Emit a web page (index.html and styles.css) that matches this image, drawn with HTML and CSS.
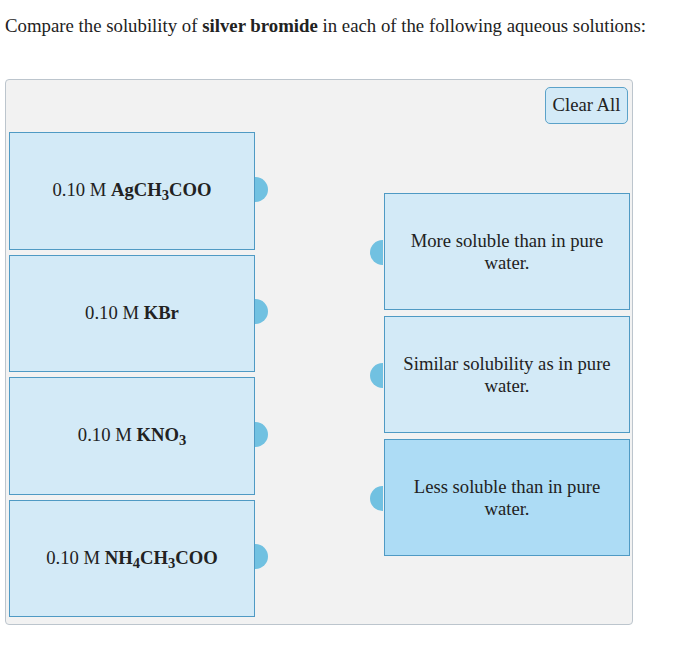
FILE: index.html
```html
<!DOCTYPE html>
<html>
<head>
<meta charset="utf-8">
<link rel="stylesheet" href="styles.css">
</head>
<body>
<p class="prompt">Compare the solubility of <b>silver bromide</b> in each of the following aqueous solutions:</p>
<div class="board">
  <div class="sources">
    <div class="item src"><span>0.10 M <b>AgCH<sub>3</sub>COO</b></span></div>
    <div class="item src"><span>0.10 M <b>KBr</b></span></div>
    <div class="item src"><span>0.10 M <b>KNO<sub>3</sub></b></span></div>
    <div class="item src"><span>0.10 M <b>NH<sub>4</sub>CH<sub>3</sub>COO</b></span></div>
  </div>
  <div class="targets">
    <button class="clear">Clear All</button>
    <div class="target-list">
      <div class="item dst"><span>More soluble than in pure water.</span></div>
      <div class="item dst"><span>Similar solubility as in pure water.</span></div>
      <div class="item dst active"><span>Less soluble than in pure water.</span></div>
    </div>
  </div>
</div>
</body>
</html>
```
FILE: styles.css
```css
html, body {
  margin: 0;
  padding: 0;
  background: #ffffff;
}
body {
  padding: 0 5px;
  font-family: "Liberation Serif", "Times New Roman", serif;
  color: #222;
}
.prompt {
  margin: 0;
  padding-top: 15px;
  font-size: 18.8px;
  line-height: 22px;
  height: 64px;
}
.board {
  width: 626px;
  height: 544px;
  border: 1px solid #bcc5cd;
  border-radius: 4px;
  background: #f2f2f2;
  display: flex;
  justify-content: space-between;
}
.sources {
  padding: 52px 0 0 3px;
  display: flex;
  flex-direction: column;
  gap: 5px;
}
.targets {
  padding-right: 2px;
  display: flex;
  flex-direction: column;
  align-items: flex-end;
}
.target-list {
  margin-top: 69px;
  display: flex;
  flex-direction: column;
  gap: 6px;
}
.clear {
  margin: 7px 2px 0 0;
  width: 83px;
  height: 37px;
  padding: 0 0 2px;
  border: 1px solid #5ba2c9;
  border-radius: 5px;
  background: #d3eaf7;
  font-family: "Liberation Serif", "Times New Roman", serif;
  font-size: 18.67px;
  color: #222;
}
.item {
  position: relative;
  box-sizing: border-box;
  width: 246px;
  height: 117.5px;
  border: 1px solid #4f9ac4;
  background: #d3eaf7;
  display: flex;
  align-items: center;
  justify-content: center;
  text-align: center;
  font-size: 18.67px;
}
.src span {
  margin-top: -1px;
}
.dst {
  height: 117px;
  padding: 0 16px;
  line-height: 22px;
}
.dst.active {
  background: #addcf5;
}
.src::after {
  content: "";
  position: absolute;
  left: calc(100% + 1px);
  top: 50%;
  margin-top: -14px;
  width: 13px;
  height: 25px;
  border-radius: 0 13px 13px 0;
  background: #71c1e1;
}
.dst::before {
  content: "";
  position: absolute;
  right: calc(100% + 2px);
  top: 50%;
  margin-top: -12px;
  width: 13px;
  height: 25px;
  border-radius: 13px 0 0 13px;
  background: #71c1e1;
}
sub {
  font-size: 0.78em;
  vertical-align: -0.3em;
  line-height: 0;
}
```
